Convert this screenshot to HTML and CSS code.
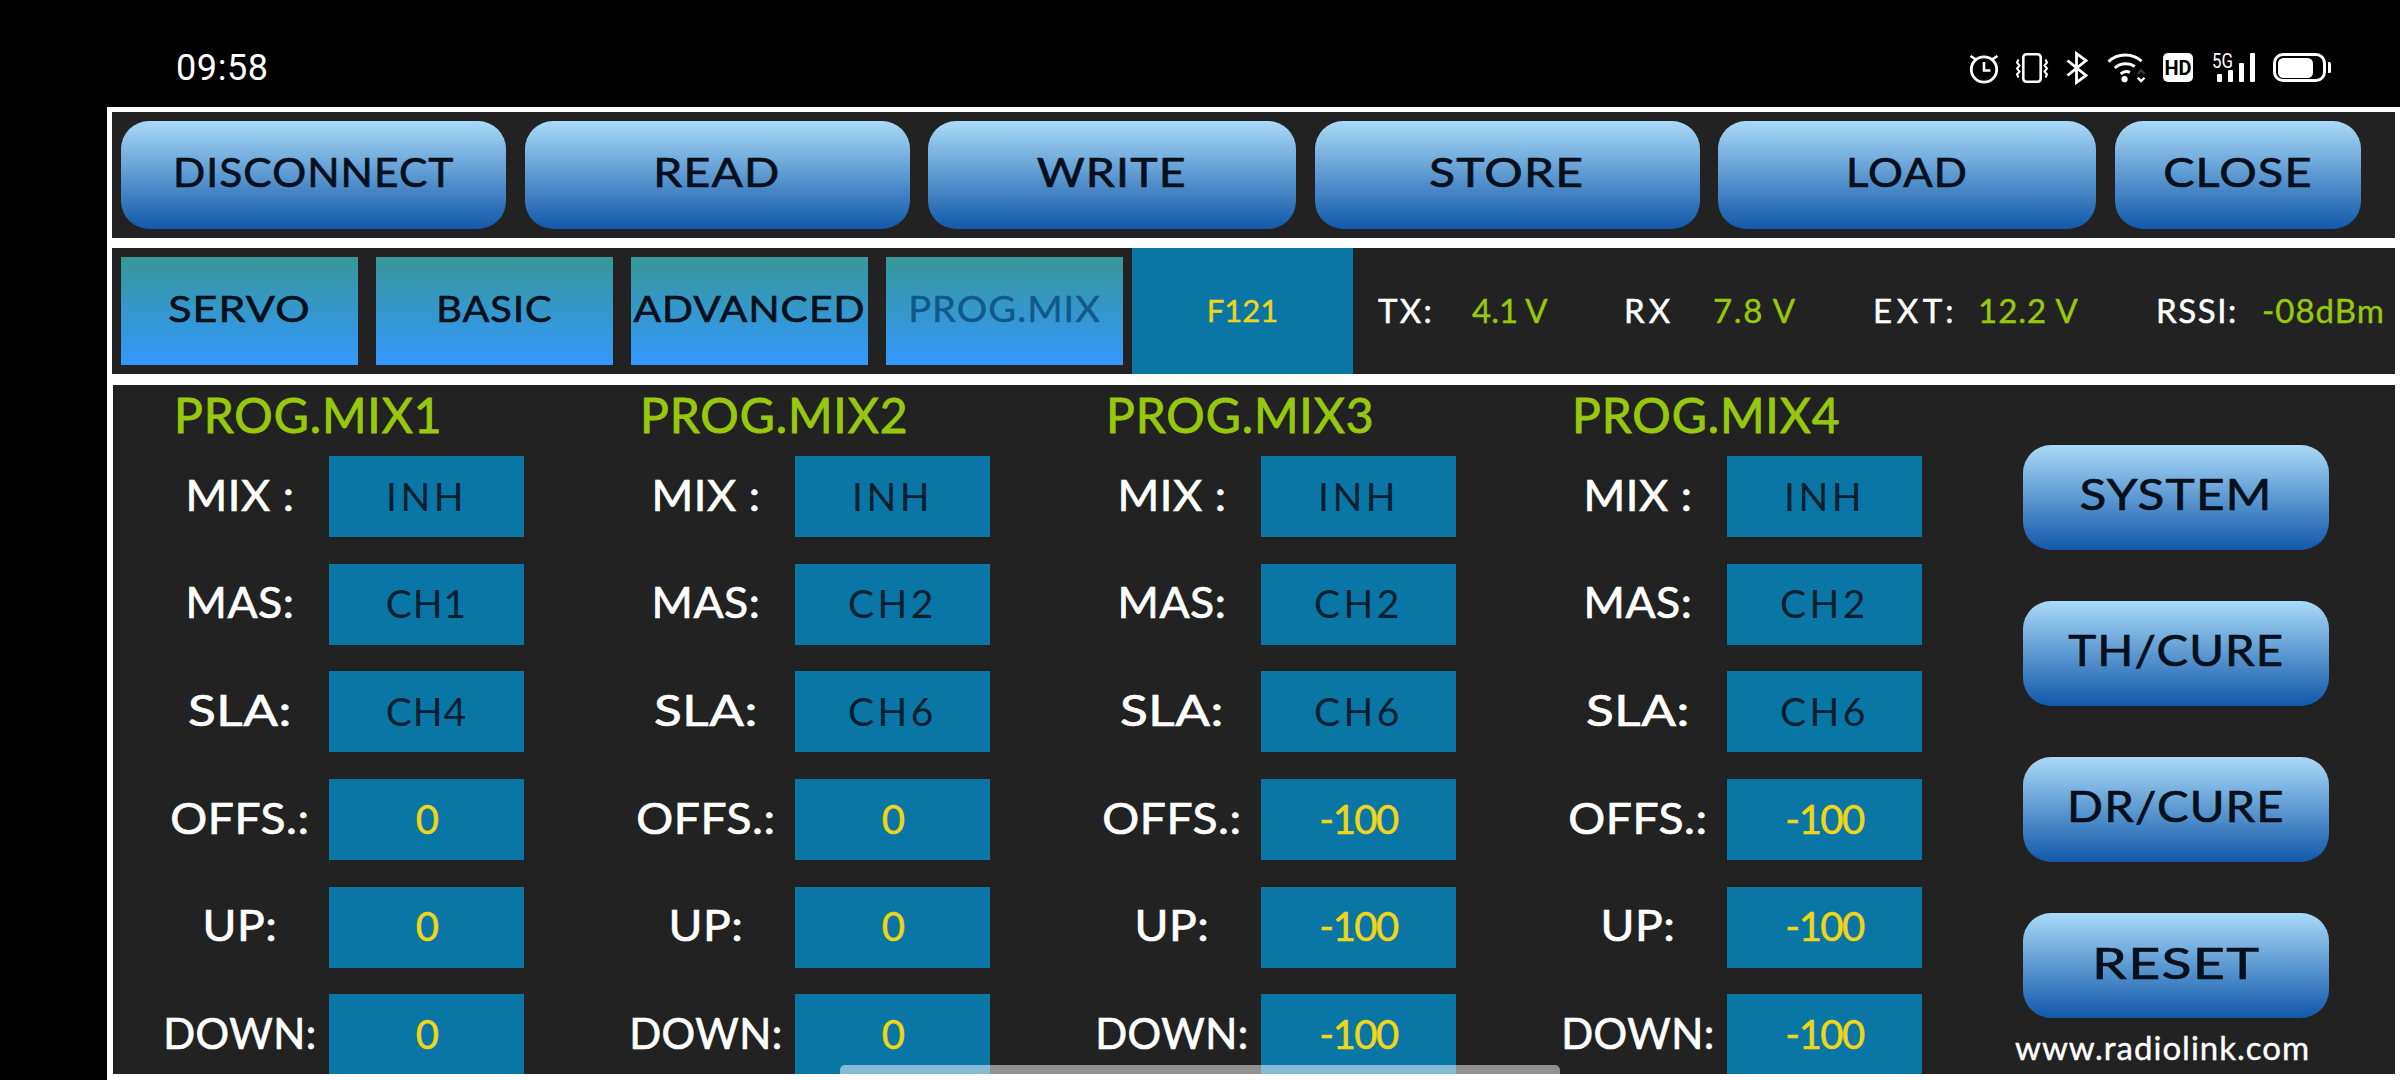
FILE: index.html
```html
<!DOCTYPE html>
<html lang="en">
<head>
<meta charset="utf-8">
<title>Radiolink PROG.MIX</title>
<link rel="stylesheet" href="styles.css">
</head>
<body>
<header class="status">
  <span class="clock">09:58</span>
  <div class="icons">
    <svg class="i-alarm" viewBox="0 0 34 34"><circle cx="17" cy="18.5" r="12.7" fill="none" stroke="#fff" stroke-width="2.8"/><path d="M17 11v8.5h6.5M3.5 5L9 8.5M30.5 5L25 8.5" fill="none" stroke="#fff" stroke-width="2.6"/></svg>
    <svg class="i-vib" viewBox="0 0 32 30"><rect x="7.3" y="1.3" width="17.4" height="27.4" rx="3" fill="none" stroke="#fff" stroke-width="2.6"/><path d="M2.500 6.500l-1.500 3 2.500 3-2.500 3 2.500 3-2.500 3 1.500 3M29.500 6.500l1.500 3-2.500 3 2.500 3-2.500 3 2.500 3-1.500 3" fill="none" stroke="#fff" stroke-width="2"/></svg>
    <svg class="i-bt" viewBox="0 0 22 32"><path d="M1.500 8.500L20 23.500 10.500 30.500V1.500L20 8.500 1.500 23.500" fill="none" stroke="#fff" stroke-width="2.800"/></svg>
    <svg class="i-wifi" viewBox="0 0 40 30"><path d="M1.500 8.500C11-.5 26-.5 35.500 8" fill="none" stroke="#fff" stroke-width="3"/><path d="M8 15C14 9.500 23 9.500 28.500 13.500" fill="none" stroke="#fff" stroke-width="3"/><path d="M14 21c3-2.500 6.500-2.800 9.500-1.500" fill="none" stroke="#fff" stroke-width="3"/><circle cx="18" cy="26.500" r="3.200" fill="#fff"/><path d="M31.500 21l3.500-3.500 3.500 3.500" fill="none" stroke="#3a3a3a" stroke-width="2.400"/><path d="M31.500 25l3.500 3.500 3.500-3.500" fill="none" stroke="#fff" stroke-width="2.400"/></svg>
    <svg class="i-hd" viewBox="0 0 30 29"><rect width="30" height="29" rx="5" fill="#fff"/><text x="15" y="22" class="hd-text" text-anchor="middle">HD</text></svg>
    <svg class="i-sig" viewBox="0 0 43 29"><text x="0" y="15" class="sig-text" textLength="21" lengthAdjust="spacingAndGlyphs">5G</text><rect x="5" y="21" width="5" height="8" rx="1" fill="#fff"/><rect x="16" y="17" width="5" height="12" rx="1" fill="#fff"/><rect x="27" y="10" width="5" height="19" rx="1" fill="#fff"/><rect x="38" y="0" width="5" height="29" rx="1" fill="#fff"/></svg>
    <svg class="i-bat" viewBox="0 0 58 29"><rect x="1.500" y="1.500" width="50" height="26" rx="8.500" fill="none" stroke="#fff" stroke-width="3"/><rect x="5" y="5" width="35" height="20" rx="5.500" fill="#fff"/><path d="M55 9h1.500a1.500 1.500 0 0 1 1.500 1.500v8a1.500 1.500 0 0 1-1.500 1.500H55z" fill="#fff"/></svg>
  </div>
</header>

<main class="frame">
  <nav class="bar actions">
    <button class="btn w-385"><span class="sx x106">DISCONNECT</span></button>
    <button class="btn w-385"><span class="sx x116">READ</span></button>
    <button class="btn w-368"><span class="sx x116">WRITE</span></button>
    <button class="btn w-385"><span class="sx x120">STORE</span></button>
    <button class="btn w-378"><span class="sx x109">LOAD</span></button>
    <button class="btn w-246"><span class="sx x117">CLOSE</span></button>
  </nav>

  <section class="bar info">
    <div class="tabs">
      <button class="tab"><span class="sx x116">SERVO</span></button>
      <button class="tab"><span class="sx x107">BASIC</span></button>
      <button class="tab"><span class="sx x110">ADVANCED</span></button>
      <button class="tab tab-active"><span class="sx x103">PROG.MIX</span></button>
    </div>
    <div class="model">F121</div>
    <div class="tele">
      <b class="ls-23">TX:</b><i class="ls-0">4.1 V</i>
      <b class="ls-40">RX</b><i class="ls-16">7.8 V</i>
      <b class="ls-47">EXT:</b><i class="ls-10">12.2 V</i>
      <b class="ls-16">RSSI:</b><i class="ls-10">-08dBm</i>
    </div>
  </section>

  <section class="panel">
    <div class="mix">
      <h2>PROG.MIX1</h2>
      <div class="rows">
        <span class="lab x107">MIX :</span><span class="cell dark wide">INH</span>
        <span class="lab x106">MAS:</span><span class="cell dark">CH1</span>
        <span class="lab x122">SLA:</span><span class="cell dark">CH4</span>
        <span class="lab x110">OFFS.:</span><span class="cell num">0</span>
        <span class="lab x110">UP:</span><span class="cell num">0</span>
        <span class="lab">DOWN:</span><span class="cell num">0</span>
      </div>
    </div>
    <div class="mix">
      <h2>PROG.MIX2</h2>
      <div class="rows">
        <span class="lab x107">MIX :</span><span class="cell dark wide">INH</span>
        <span class="lab x106">MAS:</span><span class="cell dark wide">CH2</span>
        <span class="lab x122">SLA:</span><span class="cell dark wide">CH6</span>
        <span class="lab x110">OFFS.:</span><span class="cell num">0</span>
        <span class="lab x110">UP:</span><span class="cell num">0</span>
        <span class="lab">DOWN:</span><span class="cell num">0</span>
      </div>
    </div>
    <div class="mix">
      <h2>PROG.MIX3</h2>
      <div class="rows">
        <span class="lab x107">MIX :</span><span class="cell dark wide">INH</span>
        <span class="lab x106">MAS:</span><span class="cell dark wide">CH2</span>
        <span class="lab x122">SLA:</span><span class="cell dark wide">CH6</span>
        <span class="lab x110">OFFS.:</span><span class="cell num">-100</span>
        <span class="lab x110">UP:</span><span class="cell num">-100</span>
        <span class="lab">DOWN:</span><span class="cell num">-100</span>
      </div>
    </div>
    <div class="mix">
      <h2>PROG.MIX4</h2>
      <div class="rows">
        <span class="lab x107">MIX :</span><span class="cell dark wide">INH</span>
        <span class="lab x106">MAS:</span><span class="cell dark wide">CH2</span>
        <span class="lab x122">SLA:</span><span class="cell dark wide">CH6</span>
        <span class="lab x110">OFFS.:</span><span class="cell num">-100</span>
        <span class="lab x110">UP:</span><span class="cell num">-100</span>
        <span class="lab">DOWN:</span><span class="cell num">-100</span>
      </div>
    </div>
    <aside class="side">
      <button class="btn side-btn"><span class="sx x115">SYSTEM</span></button>
      <button class="btn side-btn"><span class="sx x110">TH/CURE</span></button>
      <button class="btn side-btn"><span class="sx x110">DR/CURE</span></button>
      <button class="btn side-btn reset"><span class="sx x129">RESET</span></button>
      <span class="site">www.radiolink.com</span>
    </aside>
  </section>
</main>
<div class="gesture"></div>
</body>
</html>
```
FILE: styles.css
```css
* { box-sizing: border-box; }
html, body { margin: 0; height: 100%; }
body {
  width: 2400px;
  height: 1080px;
  overflow: hidden;
  background: #000;
  font-family: Lato, "Liberation Sans", sans-serif;
  position: relative;
}
.status {
  height: 107px;
  display: flex;
  align-items: center;
  justify-content: space-between;
  padding: 0 69px 0 176px;
  color: #fff;
}
.clock {
  font-family: Roboto, sans-serif;
  font-size: 36px;
  letter-spacing: 0.6px;
  position: relative;
  top: 14px;
}
.icons {
  display: flex;
  align-items: center;
  position: relative;
  top: 14px;
}
.icons svg { display: block; flex: none; overflow: visible; }
.i-alarm { width: 34px; height: 34px; margin-right: 15px; }
.i-vib { width: 32px; height: 30px; margin-right: 18px; }
.i-bt { width: 22px; height: 32px; margin-right: 19px; }
.i-wifi { width: 39px; height: 30px; margin-right: 17px; }
.i-hd { width: 30px; height: 29px; margin-right: 19px; }
.i-sig { width: 43px; height: 29px; margin-right: 18px; }
.i-bat { width: 58px; height: 29px; }
.hd-text { font-family: Roboto, sans-serif; font-weight: 700; font-size: 20px; fill: #000; }
.sig-text { font-family: Roboto, sans-serif; font-size: 20px; fill: #fff; }

.frame {
  margin-left: 107px;
  width: 2293px;
  height: 973px;
  background: #fff;
  padding: 5px 5px 6px 5px;
  display: flex;
  flex-direction: column;
}
.bar { height: 126px; background: #222; display: flex; flex: none; }
.actions { padding: 9px; gap: 18.5px; }
.info { margin-top: 10px; }

button { border: 0; font: inherit; cursor: pointer; white-space: nowrap; }
.btn {
  height: 108px;
  flex: none;
  padding: 0 0 6px;
  border-radius: 28px;
  background: linear-gradient(#a9daf8, #1158aa);
  color: #06101c;
  font-size: 40px;
  letter-spacing: 1px;
  -webkit-text-stroke: 0.7px #06101c;
}
.w-385 { width: 385px; }
.w-378 { width: 378px; }
.w-368 { width: 368px; }
.w-246 { width: 246px; }

.sx { display: inline-block; }
.x103 { transform: scaleX(1.03); }
.x106 { transform: scaleX(1.06); }
.x107 { transform: scaleX(1.07); }
.x109 { transform: scaleX(1.09); }
.x110 { transform: scaleX(1.1); }
.x115 { transform: scaleX(1.15); }
.x116 { transform: scaleX(1.16); }
.x117 { transform: scaleX(1.17); }
.x120 { transform: scaleX(1.2); }
.x122 { transform: scaleX(1.22); }
.x129 { transform: scaleX(1.29); }

.ls-0 { letter-spacing: 0; }
.ls-10 { letter-spacing: 1px; }
.ls-16 { letter-spacing: 1.6px; }
.ls-23 { letter-spacing: 2.3px; }
.ls-40 { letter-spacing: 4px; }
.ls-47 { letter-spacing: 4.7px; }

.tabs { display: flex; gap: 18px; padding: 9px; }
.tab {
  width: 237px;
  height: 108px;
  padding: 0 0 8px;
  background: linear-gradient(#379798, #3398fe);
  color: #06101c;
  font-size: 37px;
  letter-spacing: 1px;
  -webkit-text-stroke: 0.7px #06101c;
}
.tab-active { color: #0f5a88; -webkit-text-stroke: 0.4px #0f5a88; }
.model {
  width: 221px;
  flex: none;
  background: #0a76a6;
  display: flex;
  align-items: center;
  justify-content: center;
  padding-bottom: 2px;
  color: #f0d616;
  font-size: 31px;
  -webkit-text-stroke: 0.4px #f0d616;
}
.tele {
  display: grid;
  grid-template-columns: 94px 152px 89px 160px 105px 178px 106px auto;
  align-items: center;
  padding-left: 25px;
  padding-bottom: 2px;
  font-size: 33px;
  white-space: nowrap;
}
.tele b { font-weight: 400; color: #fff; -webkit-text-stroke: 0.5px #fff; }
.tele i { font-style: normal; color: #97c80e; -webkit-text-stroke: 0.4px #97c80e; }

.panel {
  flex: 1;
  min-height: 0;
  margin-left: 1px;
  margin-top: 11px;
  background: #222;
  display: flex;
  gap: 93px;
  padding-left: 38px;
  overflow: hidden;
}
.mix { width: 373px; flex: none; }
.mix h2 {
  margin: 0 0 0 23px;
  height: 71px;
  line-height: 60px;
  font-size: 48px;
  font-weight: 400;
  color: #97c80e;
  letter-spacing: 0.9px;
  -webkit-text-stroke: 0.9px #97c80e;
  white-space: nowrap;
}
.rows {
  display: grid;
  grid-template-columns: 178px 195px;
  grid-auto-rows: 81px;
  row-gap: 26.7px;
}
.lab {
  display: flex;
  align-items: center;
  justify-content: center;
  padding-bottom: 4px;
  color: #fff;
  font-size: 42px;
  letter-spacing: 0.5px;
  white-space: nowrap;
  -webkit-text-stroke: 0.7px #fff;
}
.cell {
  background: #0a76a6;
  display: flex;
  align-items: center;
  justify-content: center;
  padding-bottom: 2px;
}
.dark { color: #04202f; font-size: 39px; letter-spacing: 1px; }
.wide { letter-spacing: 3.5px; }
.num { color: #f0d616; font-size: 40px; letter-spacing: -1.5px; -webkit-text-stroke: 0.5px #f0d616; }

.side {
  margin-left: 8px;
  padding-top: 60px;
  display: flex;
  flex-direction: column;
  gap: 51px;
  align-items: flex-start;
}
.side-btn { width: 306px; height: 105px; padding-bottom: 8px; font-size: 43px; }
.reset { padding-bottom: 6px; }
.site {
  margin: -42px 0 0 -8px;
  color: #fff;
  font-size: 33px;
  letter-spacing: 1px;
  white-space: nowrap;
  -webkit-text-stroke: 0.4px #fff;
}
.gesture {
  position: absolute;
  left: 840px;
  top: 1065px;
  width: 720px;
  height: 9px;
  background: rgba(255, 255, 255, 0.5);
  border-radius: 5px 5px 0 0;
}
```
